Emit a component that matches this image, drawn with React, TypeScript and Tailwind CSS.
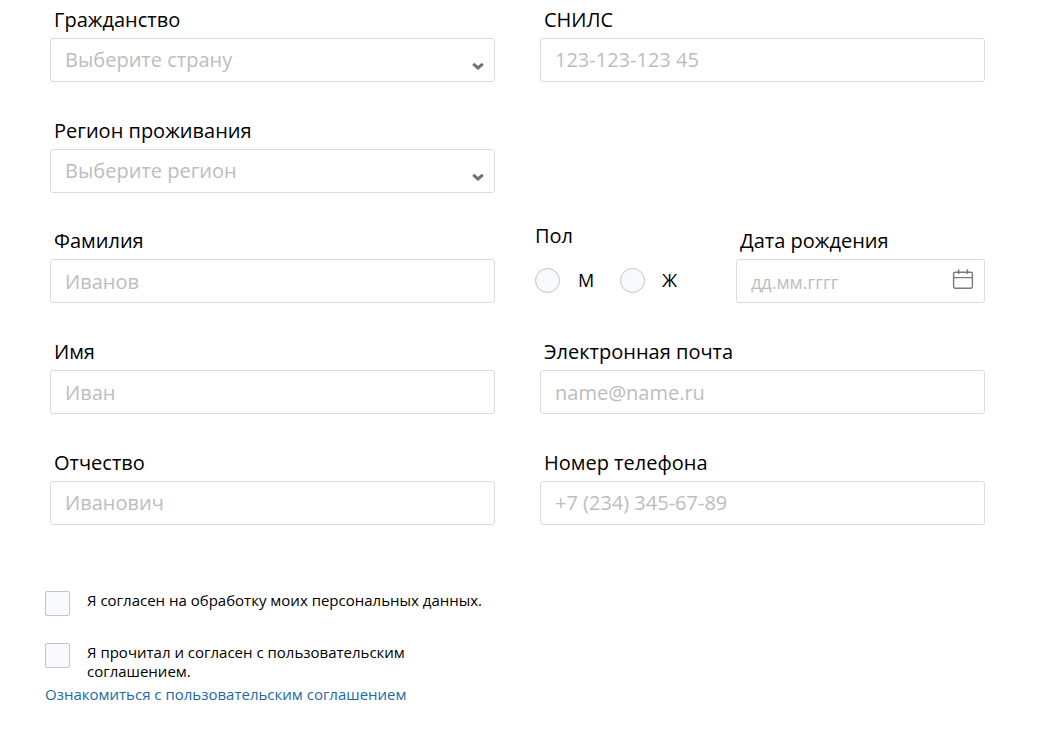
const font = "font-['Open_Sans',sans-serif]";

function Chevron() {
  return (
    <svg width="14" height="9" viewBox="0 0 14 9" className="absolute left-[420px] top-[23px]">
      <path d="M2.2 1.8 L7 6 L11.8 1.8" fill="none" stroke="#707070" strokeWidth="3" />
    </svg>
  );
}

function Calendar() {
  return (
    <svg width="22" height="22" viewBox="0 0 22 22" fill="none" stroke="#7a7a7a" strokeWidth="1.4" className="absolute right-[10px] top-[9px]">
      <rect x="1.6" y="3.2" width="18.8" height="16" rx="1.6" />
      <path d="M1.6 8.6 H20.4 M6.6 0.2 V5 M15.4 0.2 V5" />
    </svg>
  );
}

function Field({ label, placeholder, select, className, low }: { label: string; placeholder: string; select?: boolean; className?: string; low?: boolean }) {
  return (
    <div className={`w-[445px] ${className ?? ""}`}>
      <div className="h-[38px] pl-[4px] pt-[6px] text-[20px] leading-[28px] text-black">{label}</div>
      <div className={`relative h-[44px] rounded-[3px] border border-[#dcdcdc] bg-white pl-[14px] text-[20px] leading-[42px] text-[#bdbdbd] ${low ? "pt-[1px]" : ""}`}>
        {placeholder}
        {select && <Chevron />}
      </div>
    </div>
  );
}

function Check({ children, wide }: { children: React.ReactNode; wide?: boolean }) {
  return (
    <div className={`flex ${wide ? "w-[460px]" : "w-[400px]"}`}>
      <div className="h-[25px] w-[25px] shrink-0 rounded-[2px] border border-[#c4c4c4] bg-[#f8f9fd]" />
      <div className="ml-[17px] text-[15px] leading-[19px] text-black">{children}</div>
    </div>
  );
}

function Radio({ label, narrow }: { label: string; narrow?: boolean }) {
  return (
    <div className="flex items-center">
      <div className="h-[25px] w-[25px] rounded-full border border-[#c4c4c4] bg-[#f8f9fd]" />
      <div className={`w-[60px] text-[18px] leading-[25px] text-black ${narrow ? "pl-[17px]" : "pl-[18px]"}`}>{label}</div>
    </div>
  );
}

export default function App() {
  return (
    <div className={`${font} h-[730px] w-[1040px] overflow-hidden bg-white`}>
      <div className="grid grid-cols-[445px_445px] gap-x-[45px] gap-y-[29px] pl-[50px]">
        <Field label="Гражданство" placeholder="Выберите страну" select />
        <Field label="СНИЛС" placeholder="123-123-123 45" />
        <Field label="Регион проживания" placeholder="Выберите регион" select />
        <div />
        <Field label="Фамилия" placeholder="Иванов" className="-mt-[1px]" low />
        <div className="-mt-[1px] flex">
          <div className="ml-[-5px] w-[201px]">
            <div className="h-[30px] pt-[1px] text-[20px] leading-[28px] text-black">Пол</div>
            <div className="mt-[17px] flex">
              <Radio label="М" />
              <Radio label="Ж" narrow />
            </div>
          </div>
          <div className="w-[249px]">
            <div className="h-[38px] pl-[4px] pt-[6px] text-[20px] leading-[28px] text-black">Дата рождения</div>
            <div className="relative h-[44px] rounded-[3px] border border-[#dcdcdc] bg-white pl-[14px] pt-[1px] text-[18px] leading-[42px] text-[#bdbdbd]">
              дд.мм.гггг
              <Calendar />
            </div>
          </div>
        </div>
        <Field label="Имя" placeholder="Иван" low />
        <Field label="Электронная почта" placeholder="name@name.ru" low />
        <Field label="Отчество" placeholder="Иванович" />
        <Field label="Номер телефона" placeholder="+7 (234) 345-67-89" />
      </div>
      <div className="ml-[45px] mt-[66px]">
        <Check wide>Я согласен на обработку моих персональных данных.</Check>
        <div className="mt-[27px]">
          <Check>Я прочитал и согласен с пользовательским соглашением.</Check>
        </div>
        <div className="mt-[4px] text-[15px] leading-[19px] text-[#1c6aa5]">Ознакомиться с пользовательским соглашением</div>
      </div>
    </div>
  );
}
